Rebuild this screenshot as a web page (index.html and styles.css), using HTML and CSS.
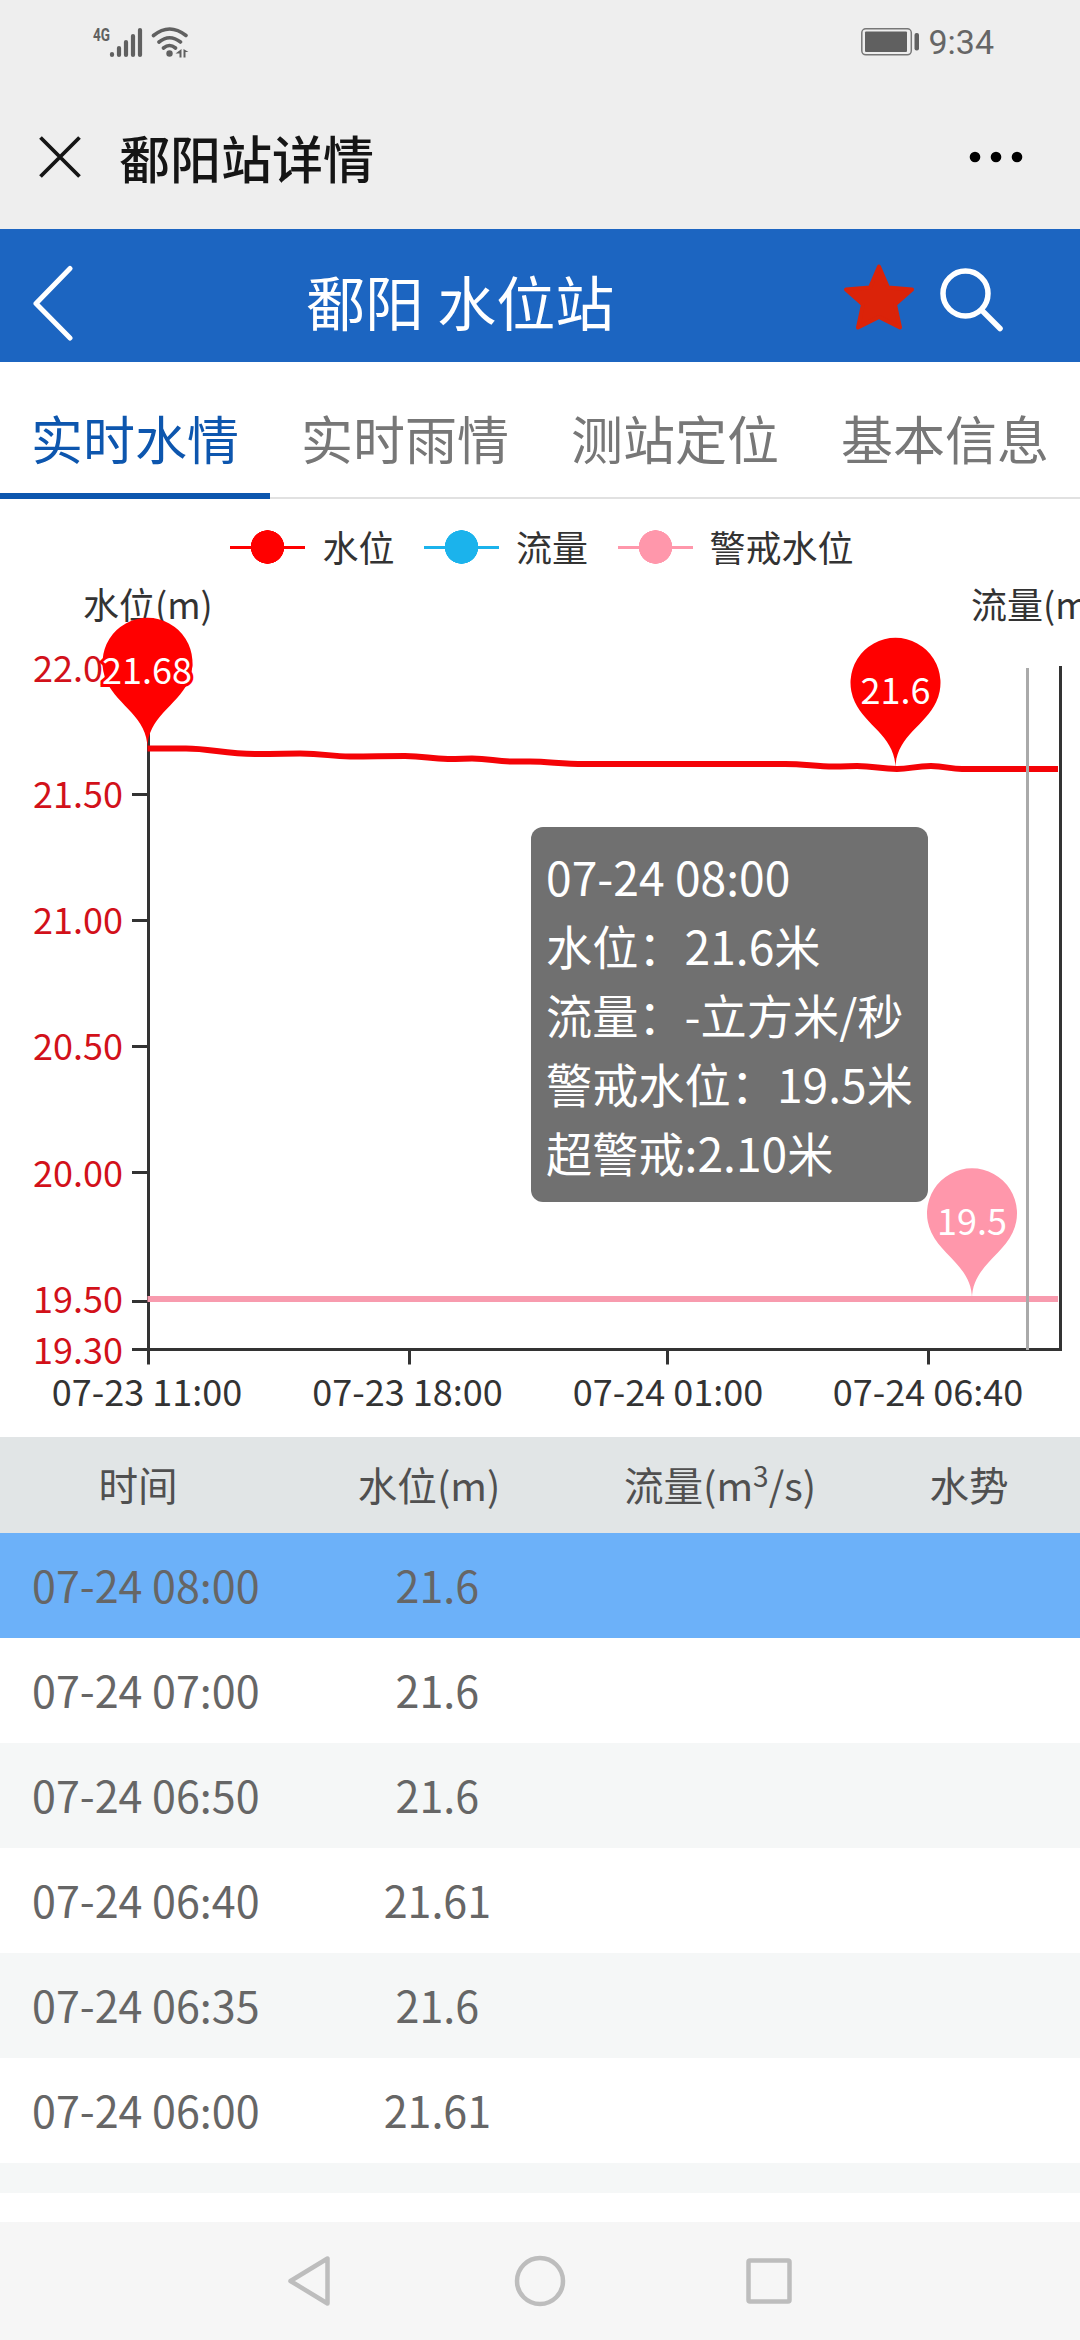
FILE: index.html
```html
<!DOCTYPE html>
<html lang="zh-CN">
<head>
    <meta charset="UTF-8">
    <meta name="viewport" content="width=device-width, initial-scale=1.0">
    <title>鄱阳站详情</title>
    <link rel="stylesheet" href="styles.css">
</head>
<body>
    <div class="status-bar">
        <svg class="signal" width="100" height="36" viewBox="0 0 100 36" fill="none" stroke="#606060" stroke-width="4.2" stroke-linecap="round">
            <text x="1" y="17" class="network" textLength="17" lengthAdjust="spacingAndGlyphs">4G</text>
            <path d="M20 30v1M27 24v7M34 18v13M41 12v19M48 6v25"/>
            <path d="M61.500 11.500Q77.500 -1.500 94 11.500M67 18Q77.500 9.500 88.500 18M71.500 24Q77.500 19 83.500 24" stroke-width="3.600"/>
            <circle cx="77.500" cy="29.500" r="3.200" fill="#606060" stroke="none"/>
            <path d="M89.500 25v8.500h-2v-4h-4zM91.500 25l5 3h-3v5.500h-2z" fill="#606060" stroke="none"/>
        </svg>
        <div class="status-right">
            <svg width="58" height="28" viewBox="0 0 58 28">
                <rect x="0.800" y="0.800" width="49.500" height="26" rx="4" fill="none" stroke="#777" stroke-width="1.500"/>
                <rect x="4" y="3.500" width="42" height="20.500" rx="1" fill="#606060"/>
                <rect x="53.500" y="5" width="4.500" height="17.500" rx="2" fill="#606060"/>
            </svg>
            <span class="clock">9:34</span>
        </div>
    </div>

    <div class="title-bar">
        <svg width="42" height="42" viewBox="0 0 42 42" stroke="#151515" stroke-width="3.800">
            <path d="M1.500 1.500L40.500 40.500M40.500 1.500L1.500 40.500"/>
        </svg>
        <div class="page-title">鄱阳站详情</div>
        <svg width="54" height="12" viewBox="0 0 54 12">
            <circle cx="6" cy="6" r="5.300"/>
            <circle cx="27" cy="6" r="5.300"/>
            <circle cx="48" cy="6" r="5.300"/>
        </svg>
    </div>

    <div class="header">
        <svg class="back" width="40" height="76" viewBox="0 0 40 76" fill="none" stroke="#fff" stroke-width="5" stroke-linecap="round" stroke-linejoin="round">
            <path d="M37 3.500L3 38.500L37 73"/>
        </svg>
        <h1>鄱阳 水位站</h1>
        <div class="header-icons">
            <svg class="star" width="72" height="68" viewBox="0 0 72 68" fill="#db2309" stroke="#db2309" stroke-width="4" stroke-linejoin="round">
                <path d="M36 3.500L45 24.500L69 26.500L52 41.500L57 64.500L36 54L15 64.500L20 41.500L3 26.500L27 24.500Z"/>
            </svg>
            <svg width="64" height="64" viewBox="0 0 64 64" fill="none" stroke="#fff" stroke-width="5.500" stroke-linecap="round">
                <circle cx="25.500" cy="25.500" r="22.500"/>
                <path d="M42 42.500L60 60.500"/>
            </svg>
        </div>
    </div>

    <div class="tabs">
        <div class="tab active">实时水情</div>
        <div class="tab">实时雨情</div>
        <div class="tab">测站定位</div>
        <div class="tab">基本信息</div>
    </div>

    <div class="chart">
        <div class="legend">
            <div class="legend-item level"><i></i><span>水位</span></div>
            <div class="legend-item flow"><i></i><span>流量</span></div>
            <div class="legend-item warning"><i></i><span>警戒水位</span></div>
        </div>
        <svg class="plot" width="1080" height="857" viewBox="0 0 1080 857">
            <defs>
                <path id="pin" d="M-40.660 -66.400A45 45 0 1 1 40.660 -66.400C29.090 -42 0 -31.500 0 0C0 -31.500 -29.090 -42 -40.660 -66.400Z"/>
            </defs>
            <!-- axes -->
            <g stroke="#333" stroke-width="3">
                <path d="M148.500 88V784.500M1060.500 86V771M132 769.500H1062"/>
                <path d="M132 214.500H148M132 340.500H148M132 466.500H148M132 592.500H148M132 721.500H148"/>
                <path d="M409.500 770V784.500M667.500 770V784.500M928.500 770V784.500"/>
            </g>
            <g class="axis-name">
                <text x="83" y="39">水位(m)</text>
                <text x="971" y="39">流量(m³/s)</text>
            </g>
            <g class="y-label">
                <text x="123" y="101.500">22.00</text>
                <text x="123" y="227.500">21.50</text>
                <text x="123" y="354">21.00</text>
                <text x="123" y="480">20.50</text>
                <text x="123" y="606.500">20.00</text>
                <text x="123" y="732.500">19.50</text>
                <text x="123" y="783.500">19.30</text>
            </g>
            <g class="x-label">
                <text x="147" y="825.500">07-23 11:00</text>
                <text x="407.500" y="825.500">07-23 18:00</text>
                <text x="668" y="825.500">07-24 01:00</text>
                <text x="928" y="825.500">07-24 06:40</text>
            </g>
            <!-- series -->
            <g fill="none" stroke-width="6">
                <path stroke="#f40307" d="M147.500 168.500H186C210 168.500 225 174 255 174C280 174 285 173.500 300 173.500C325 173.500 330 176.500 350 176.500C375 176.500 380 176 405 176C425 176 430 179 448 179C460 179 465 178.500 472 178.500C490 178.500 495 181.500 512 181.500H530C550 181.500 560 184 585 184H785C805 184 815 186.500 834 186.500C845 186.500 850 186 857 186C875 186 880 189 897 189C910 189 915 186 931 186C945 186 950 189 962 189H1058"/>
                <path stroke="#f89bae" d="M147.500 719H1058"/>
            </g>
            <path d="M1027.500 88V770" stroke="#aaa" stroke-width="3"/>
            <!-- mark points -->
            <use href="#pin" x="147.500" y="168.500" fill="#f00"/>
            <use href="#pin" x="895.500" y="188.500" fill="#f00"/>
            <use href="#pin" x="972" y="719" fill="#ff97ab"/>
            <g class="pin-label">
                <text x="147" y="104" class="outlined">21.68</text>
                <text x="895.500" y="123.500">21.6</text>
                <text x="972" y="655">19.5</text>
            </g>
        </svg>
        <div class="tooltip">
            07-24 08:00<br>
            水位：21.6米<br>
            流量：-立方米/秒<br>
            警戒水位：19.5米<br>
            超警戒:2.10米
        </div>
    </div>

    <div class="table-head">
        <div>时间</div>
        <div>水位(m)</div>
        <div>流量(m<sup>3</sup>/s)</div>
        <div>水势</div>
    </div>
    <div class="table-body">
        <div class="row selected"><div>07-24 08:00</div><div>21.6</div></div>
        <div class="row"><div>07-24 07:00</div><div>21.6</div></div>
        <div class="row"><div>07-24 06:50</div><div>21.6</div></div>
        <div class="row"><div>07-24 06:40</div><div>21.61</div></div>
        <div class="row"><div>07-24 06:35</div><div>21.6</div></div>
        <div class="row"><div>07-24 06:00</div><div>21.61</div></div>
        <div class="row"></div>
    </div>

    <div class="nav-bar">
        <svg width="506" height="52" viewBox="0 0 506 52" fill="none" stroke="#bdbdbd" stroke-width="4.500" stroke-linejoin="round">
            <path d="M40.500 3.500V48.500L3.500 26Z"/>
            <circle cx="253" cy="26" r="23"/>
            <rect x="461.500" y="5.500" width="41" height="41" rx="1.500"/>
        </svg>
    </div>
</body>
</html>
```
FILE: styles.css
```css
* {
    box-sizing: border-box;
}
body {
    margin: 0;
    height: 2340px;
    overflow: hidden;
    display: flex;
    flex-direction: column;
    background: #fff;
    font-family: "Noto Sans CJK SC", "Noto Sans", sans-serif;
    font-weight: 400;
}
svg {
    display: block;
    flex-shrink: 0;
}
.status-bar {
    height: 84px;
    padding: 0 86px 0 92px;
    display: flex;
    justify-content: space-between;
    align-items: center;
    background: #eee;
}
.network {
    font: bold 19px Roboto, sans-serif;
    fill: #606060;
    stroke: none;
}
.status-right {
    display: flex;
    align-items: center;
    gap: 9px;
}
.clock {
    font: 34px/40px Roboto, sans-serif;
    color: #666;
}
.title-bar {
    height: 145px;
    padding: 0 57px 0 39px;
    display: flex;
    align-items: center;
    background: #eee;
}
.page-title {
    flex: 1;
    margin-left: 38px;
    font-size: 51px;
    line-height: 72px;
    font-weight: 500;
    color: #151515;
}
.header {
    height: 133px;
    padding: 0 76px 0 33px;
    display: flex;
    align-items: center;
    background: #1c65c1;
    color: #fff;
}
.header .back {
    margin-top: 14px;
}
.header h1 {
    flex: 1;
    margin: 11px 0 0 233px;
    font-size: 59px;
    line-height: 84px;
    font-weight: 400;
}
.header-icons {
    display: flex;
    align-items: center;
    gap: 25px;
    margin-top: 8px;
}
.star {
    margin-bottom: 5px;
}
.tabs {
    height: 137px;
    display: flex;
    border-bottom: 2px solid #e1e1e1;
}
.tab {
    flex: 1;
    height: 137px;
    padding-top: 38px;
    text-align: center;
    font-size: 52px;
    line-height: 76px;
    color: #777;
}
.tab.active {
    color: #0d56ae;
    border-bottom: 6px solid #0d56ae;
}
.chart {
    position: relative;
    height: 938px;
}
.legend {
    height: 81px;
    padding: 15px 0 0 4px;
    display: flex;
    justify-content: center;
    align-items: center;
    gap: 29.5px;
    font-size: 36px;
    color: #333;
}
.legend-item {
    display: flex;
    align-items: center;
    gap: 17px;
}
.legend-item span {
    padding-bottom: 3px;
}
.legend-item i {
    width: 75px;
    height: 34px;
    background: radial-gradient(circle, currentColor 16.5px, transparent 17px), linear-gradient(currentColor, currentColor) center / 100% 3px no-repeat;
}
.level i {
    color: #f00;
}
.flow i {
    color: #1bb3ec;
}
.warning i {
    color: #ff97ab;
}
.plot text {
    font-size: 36px;
}
.axis-name, .x-label {
    fill: #333;
}
.y-label {
    fill: #d2111a;
    text-anchor: end;
}
.x-label, .pin-label {
    text-anchor: middle;
}
.pin-label {
    fill: #fff;
}
.outlined {
    stroke: #f00;
    stroke-width: 6px;
    paint-order: stroke;
}
.tooltip {
    position: absolute;
    left: 531px;
    top: 328px;
    width: 397px;
    height: 375px;
    padding: 14px 15px;
    border-radius: 12px;
    background: #707070;
    color: #fff;
    font-size: 46.2px;
    line-height: 69px;
    white-space: nowrap;
}
.table-head {
    height: 96px;
    display: grid;
    grid-template-columns: 276px 306px 276px 222px;
    align-items: center;
    justify-items: center;
    padding-bottom: 3px;
    background: #e1e5e6;
    color: #505050;
    font-size: 39.6px;
    line-height: 56px;
}
.table-head sup {
    font-size: 28px;
    line-height: 0;
}
.table-body {
    height: 660px;
    overflow: hidden;
}
.row {
    height: 105px;
    display: grid;
    grid-template-columns: 27% 27% 27% 19%;
    align-items: center;
    padding-bottom: 3px;
    text-align: center;
    font-size: 43px;
    color: #666;
}
.row:nth-child(odd) {
    background: #f5f7f7;
}
.row.selected {
    background: #6cb1f9;
}
.nav-bar {
    height: 118px;
    margin-top: auto;
    display: flex;
    justify-content: center;
    align-items: center;
    background: #f6f6f6;
}
```
